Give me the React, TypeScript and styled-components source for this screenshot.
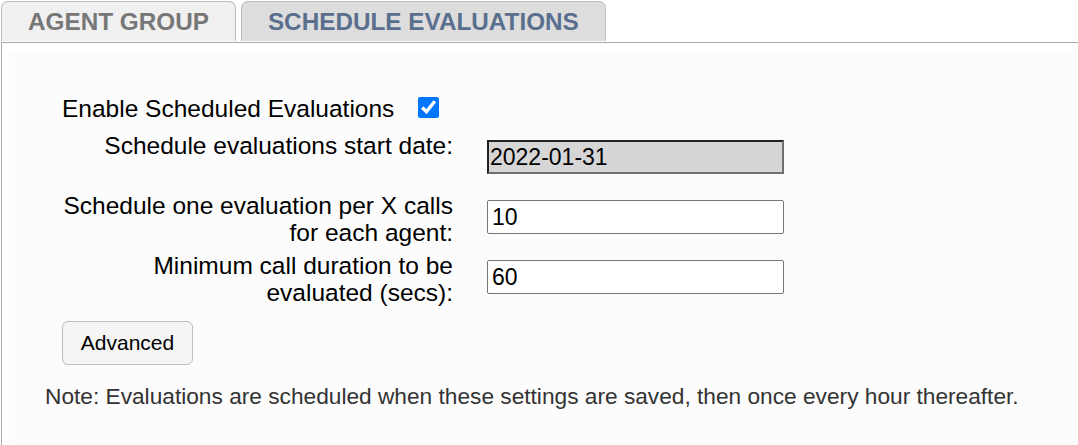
import React from "react";
import styled, { createGlobalStyle } from "styled-components";

const GlobalStyle = createGlobalStyle`
    html, body{
        margin: 0;
        padding: 0;
        background: #fff;
        font-family: "Liberation Sans", Arial, sans-serif;
    }
`;

const TABS = [
    { label: "AGENT GROUP", active: false },
    { label: "SCHEDULE EVALUATIONS", active: true },
];

const FIELDS = [
    { label: ["Schedule evaluations start date:"], value: "2022-01-31", locked: true },
    { label: ["Schedule one evaluation per X calls", "for each agent:"], value: "10", locked: false },
    { label: ["Minimum call duration to be", "evaluated (secs):"], value: "60", locked: false },
];

export default function App(){
    return(
        <>
            <GlobalStyle/>
            <TabBar>
                {TABS.map(t => (
                    <Tab key={t.label} $active={t.active}>{t.label}</Tab>
                ))}
            </TabBar>
            <Panel>
                <Content>
                    <EnableRow>
                        Enable Scheduled Evaluations
                        <Check type="checkbox" defaultChecked/>
                    </EnableRow>
                    {FIELDS.map(f => (
                        <FieldRow key={f.value}>
                            <Label>
                                {f.label.map((line, i) => <div key={i}>{line}</div>)}
                            </Label>
                            <Field $locked={f.locked} defaultValue={f.value} readOnly={f.locked}/>
                        </FieldRow>
                    ))}
                    <Button>Advanced</Button>
                    <Note>Note: Evaluations are scheduled when these settings are saved, then once every hour thereafter.</Note>
                </Content>
            </Panel>
        </>
    );
}

const TabBar = styled.div`
    display: flex;
    align-items: flex-end;
    gap: 5px;
    padding-left: 1px;
    height: 41px;
`;

const Tab = styled.div<{ $active: boolean }>`
    height: 40px;
    box-sizing: border-box;
    padding: 0 26px;
    display: flex;
    align-items: center;
    border: 1px solid #bcbcbc;
    border-bottom: none;
    border-radius: 7px 7px 0 0;
    background: ${p => p.$active ? "#dddddd" : "#f0f0f0"};
    color: ${p => p.$active ? "#5a6e8e" : "#777777"};
    font-size: 24.3px;
    font-weight: 700;
    white-space: nowrap;
`;

const Panel = styled.div`
    margin: 1px 0 0 1px;
    border-top: 1px solid #a9a9a9;
    border-left: 1px solid #a9a9a9;
    padding: 7px 0 0 7px;
    background: #fff;
`;

const Content = styled.div`
    background: #fcfcfc;
    padding: 44px 0 40px 36px;
    font-size: 24.5px;
    line-height: 27px;
    color: #000;
`;

const EnableRow = styled.div`
    display: flex;
    align-items: center;
    padding-left: 17px;
    height: 28px;
    margin-bottom: 10px;
`;

const Check = styled.input`
    width: 21px;
    height: 21px;
    margin: -2px 0 0 24px;
    accent-color: #0075ff;
`;

const FieldRow = styled.div`
    display: grid;
    grid-template-columns: 408px 297px;
    column-gap: 34px;
    align-items: start;
    height: 60px;
`;

const Label = styled.div`
    text-align: right;
`;

const Field = styled.input<{ $locked: boolean }>`
    box-sizing: border-box;
    width: 297px;
    height: 34px;
    margin-top: 8px;
    font-family: "Liberation Sans", Arial, sans-serif;
    font-size: 23px;
    color: #000;
    outline: none;
    ${p => p.$locked ? `
        background: #d6d6d6;
        border: 2px solid;
        border-color: #222 #6e6e6e #6e6e6e #222;
        border-radius: 0;
        padding: 0 1px;
    ` : `
        background: #fff;
        border: 1px solid #767676;
        border-radius: 2px;
        padding: 0 4px;
    `}
`;

const Button = styled.button`
    display: block;
    margin: 9px 0 0 17px;
    width: 131px;
    height: 44px;
    background: #f5f5f5;
    border: 1px solid #bdbdbd;
    border-radius: 6px;
    font-family: "Liberation Sans", Arial, sans-serif;
    font-size: 21px;
    color: #000;
`;

const Note = styled.p`
    margin: 18px 0 0;
    font-size: 22.7px;
    color: #333;
`;
